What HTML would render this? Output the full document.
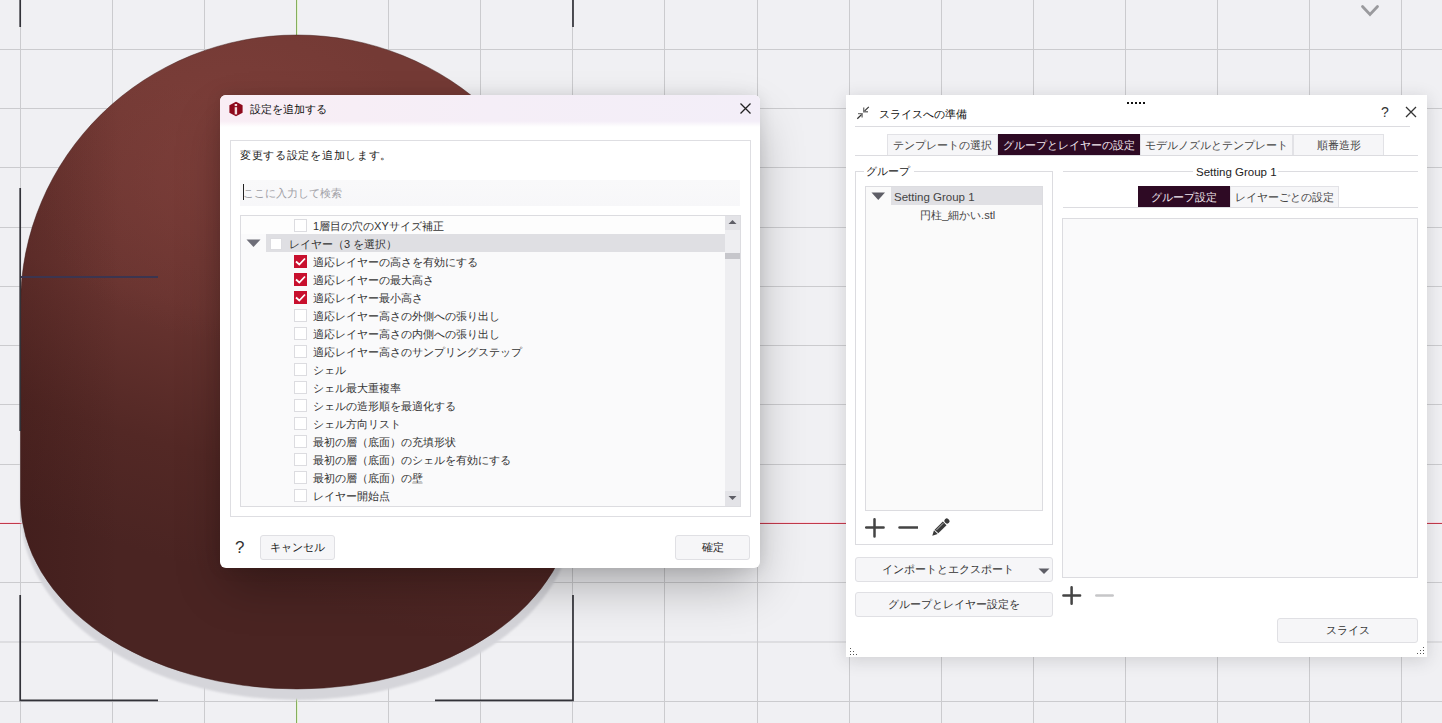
<!DOCTYPE html>
<html><head><meta charset="utf-8">
<style>
*{margin:0;padding:0;box-sizing:border-box}
html,body{width:1442px;height:723px;overflow:hidden;background:#f0f0f3;font-family:"Liberation Sans",sans-serif;color:#333}
.a{position:absolute}
.t{position:absolute;white-space:nowrap;font-size:11px;line-height:14px}
#bg{position:absolute;left:0;top:0}
#dlg{position:absolute;left:220px;top:95px;width:540px;height:473px;background:#fff;border-radius:6px;box-shadow:0 22px 46px -6px rgba(0,0,0,.30),0 0 16px rgba(0,0,0,.10);overflow:hidden}
#pnl{position:absolute;left:846px;top:95px;width:581px;height:562px;background:#fff;box-shadow:0 3px 16px rgba(40,40,50,.17)}
.btn{position:absolute;background:#f6f6f8;border:1px solid #e0e0e4;border-radius:3px;font-size:11px;line-height:22px;text-align:center;color:#222}
.cb{position:absolute;width:13px;height:13px;background:#fff;border:1px solid #dcdce0}
.cbc{position:absolute;width:13px;height:13px;background:#c8102e}
.tx{display:inline-block;white-space:nowrap}
.row{position:absolute;left:313px;font-size:11px;line-height:14px;white-space:nowrap;color:#333}
</style></head><body>
<svg id="bg" width="1442" height="723" viewBox="0 0 1442 723">
<defs>
<linearGradient id="bl" gradientUnits="userSpaceOnUse" x1="300" y1="120" x2="170" y2="560">
<stop offset="0" stop-color="#743a35"/>
<stop offset="0.45" stop-color="#693430"/>
<stop offset="0.76" stop-color="#532825"/>
<stop offset="1" stop-color="#4a2422"/>
</linearGradient>
<radialGradient id="hl" cx="0" cy="0" r="1" gradientUnits="userSpaceOnUse" gradientTransform="translate(230 170) scale(200 170)">
<stop offset="0" stop-color="#8a4540" stop-opacity="0.45"/>
<stop offset="1" stop-color="#8a4540" stop-opacity="0"/>
</radialGradient>
<linearGradient id="le" gradientUnits="userSpaceOnUse" x1="20" y1="0" x2="120" y2="0">
<stop offset="0" stop-color="#2a0c0b" stop-opacity="0.22"/>
<stop offset="1" stop-color="#2a0c0b" stop-opacity="0"/>
</linearGradient>
<filter id="sb" x="-5%" y="-5%" width="110%" height="110%"><feGaussianBlur stdDeviation="0.9"/></filter>
</defs>
<rect width="1442" height="723" fill="#f0f0f3"/>
<g stroke="#cbcbce" stroke-width="1">
<line x1="20.5" y1="0" x2="20.5" y2="723"/><line x1="112.5" y1="0" x2="112.5" y2="723"/><line x1="204.5" y1="0" x2="204.5" y2="723"/><line x1="388.5" y1="0" x2="388.5" y2="723"/><line x1="480.5" y1="0" x2="480.5" y2="723"/><line x1="572.5" y1="0" x2="572.5" y2="723"/><line x1="664.5" y1="0" x2="664.5" y2="723"/><line x1="757.5" y1="0" x2="757.5" y2="723"/><line x1="849.5" y1="0" x2="849.5" y2="723"/><line x1="941.5" y1="0" x2="941.5" y2="723"/><line x1="1033.5" y1="0" x2="1033.5" y2="723"/><line x1="1125.5" y1="0" x2="1125.5" y2="723"/><line x1="1217.5" y1="0" x2="1217.5" y2="723"/><line x1="1309.5" y1="0" x2="1309.5" y2="723"/><line x1="1401.5" y1="0" x2="1401.5" y2="723"/>
<line x1="0" y1="49.5" x2="1442" y2="49.5"/><line x1="0" y1="108.5" x2="1442" y2="108.5"/><line x1="0" y1="167.5" x2="1442" y2="167.5"/><line x1="0" y1="227.5" x2="1442" y2="227.5"/><line x1="0" y1="286.5" x2="1442" y2="286.5"/><line x1="0" y1="345.5" x2="1442" y2="345.5"/><line x1="0" y1="404.5" x2="1442" y2="404.5"/><line x1="0" y1="464.5" x2="1442" y2="464.5"/><line x1="0" y1="582.5" x2="1442" y2="582.5"/><line x1="0" y1="642" x2="1442" y2="642"/><line x1="0" y1="701.5" x2="1442" y2="701.5"/>
</g>
<line x1="0" y1="522.5" x2="1442" y2="522.5" stroke="#f9dbe6" stroke-width="1"/><line x1="0" y1="523.5" x2="1442" y2="523.5" stroke="#c23a4a" stroke-width="1"/>
<line x1="297.5" y1="0" x2="297.5" y2="723" stroke="#e4f6cf" stroke-width="1"/><line x1="296.5" y1="0" x2="296.5" y2="723" stroke="#86ad5e" stroke-width="1"/>
<!-- blob shadow -->
<path d="M20.5,317 A277 270 0 0 1 574.5,317 L574.5,511 A277 189 0 0 1 20.5,511 Z" fill="#d5d5da" filter="url(#sb)"/>
<!-- blob -->
<path d="M20.5,305 A276.5 270 0 0 1 573.5,305 L573.5,500 A276.5 189 0 0 1 20.5,500 Z" fill="url(#bl)" stroke="#3e1c1a" stroke-opacity="0.45" stroke-width="1"/>
<path d="M20.5,305 A276.5 270 0 0 1 573.5,305 L573.5,500 A276.5 189 0 0 1 20.5,500 Z" fill="url(#hl)"/>
<path d="M20.5,305 A276.5 270 0 0 1 573.5,305 L573.5,500 A276.5 189 0 0 1 20.5,500 Z" fill="url(#le)"/>
<!-- bed marks -->
<g stroke="#323238" stroke-width="1.7" fill="none">
<path d="M20.2,0 V27"/><path d="M573,0 V27"/>
<path d="M20.2,188 V431"/>
<path d="M20.2,595 V700.4 H158"/><path d="M435,700.4 H573 V595"/>
</g>
<path d="M21,277 H158" stroke="#3b3550" stroke-width="2"/>
<!-- chevron -->
<path d="M1362.5,6.5 L1370,14.5 L1377.5,6.5" stroke="#9a9a9d" stroke-width="2.8" fill="none" stroke-linecap="round" stroke-linejoin="miter"/>
</svg>

<div id="dlg">
<div class="a" style="left:0;top:0;width:540px;height:32px;background:linear-gradient(180deg,rgba(255,255,255,0) 0,rgba(255,255,255,0) 26px,#fff 32px),linear-gradient(90deg,#f9eef5,#f5eef7 50%,#f3eef8)"></div>
<svg class="a" style="left:8px;top:6px" width="16" height="16" viewBox="0 0 16 16"><path d="M8,0.7 L14.6,4.3 L14.6,11.7 L8,15.3 L1.4,11.7 L1.4,4.3 Z" fill="#8e0a1c"/><rect x="6.7" y="3" width="2.4" height="2.1" fill="#f3dede"/><rect x="6.7" y="6.2" width="2.4" height="7.2" fill="#f3dede"/></svg>
<div class="t" style="left:30px;top:7px;font-size:11px;color:#111">設定を追加する</div>
<svg class="a" style="left:519px;top:7px" width="13" height="13" viewBox="0 0 13 13"><path d="M1.5,1.5 L11.5,11.5 M11.5,1.5 L1.5,11.5" stroke="#222" stroke-width="1.3"/></svg>
<div class="a" style="left:10px;top:45px;width:521px;height:377px;border:1px solid #dedee2"></div>
<div class="t" style="left:20px;top:53px;font-size:11px;letter-spacing:0.7px;color:#222">変更する設定を追加します。</div>
<div class="a" style="left:20px;top:85px;width:500px;height:26px;background:linear-gradient(#f9f9fa,#f7f7f9)"></div>
<div class="a" style="left:23px;top:89px;width:1px;height:16px;background:#222"></div>
<div class="t" style="left:23px;top:91px;color:#a0a0a6">ここに入力して検索</div>
<div class="a" style="left:20px;top:120px;width:501px;height:292px;border:1px solid #dcdce0;background:#fafafb"></div>
<div class="a" style="left:21px;top:121px;width:484px;height:18px;background:#fdfdfd"></div>
<div class="a" style="left:46px;top:139px;width:459px;height:18px;background:#dfdfe3"></div>
<div class="a" style="left:505px;top:121px;width:15px;height:290px;background:#eeeef1"></div>
<div class="a" style="left:505px;top:121px;width:15px;height:14px;background:#e3e3e7"></div>
<div class="a" style="left:505px;top:396px;width:15px;height:15px;background:#e3e3e7"></div>
<div class="a" style="left:505px;top:158px;width:15px;height:6px;background:#c6c6cb"></div>
<svg class="a" style="left:508px;top:124px" width="9" height="6"><path d="M0.5,5 L4.5,1 L8.5,5 Z" fill="#5e5e66"/></svg>
<svg class="a" style="left:508px;top:400px" width="9" height="6"><path d="M0.5,1 L4.5,5 L8.5,1 Z" fill="#5e5e66"/></svg>
<div class="cb" style="left:74px;top:124px"></div>
<div class="row" style="left:93px;top:124px">1層目の穴のXYサイズ補正</div>
<svg class="a" style="left:26px;top:144px" width="15" height="9"><path d="M0.5,0.5 L14.5,0.5 L7.5,8 Z" fill="#6e6e78"/></svg>
<div class="cb" style="left:50px;top:143px;width:12px;height:12px"></div>
<div class="row" style="left:69px;top:142px">レイヤー（3 を選択）</div>
<svg class="a" style="left:74px;top:160px" width="13" height="13"><rect width="13" height="13" fill="#c8102e"/><path d="M2,6.5 L5.3,9.5 L11,3.5" stroke="#fff" stroke-width="1.8" fill="none"/></svg>
<div class="row" style="left:93px;top:160px">適応レイヤーの高さを有効にする</div>
<svg class="a" style="left:74px;top:178px" width="13" height="13"><rect width="13" height="13" fill="#c8102e"/><path d="M2,6.5 L5.3,9.5 L11,3.5" stroke="#fff" stroke-width="1.8" fill="none"/></svg>
<div class="row" style="left:93px;top:178px">適応レイヤーの最大高さ</div>
<svg class="a" style="left:74px;top:196px" width="13" height="13"><rect width="13" height="13" fill="#c8102e"/><path d="M2,6.5 L5.3,9.5 L11,3.5" stroke="#fff" stroke-width="1.8" fill="none"/></svg>
<div class="row" style="left:93px;top:196px">適応レイヤー最小高さ</div>
<div class="cb" style="left:74px;top:214px"></div>
<div class="row" style="left:93px;top:214px">適応レイヤー高さの外側への張り出し</div>
<div class="cb" style="left:74px;top:232px"></div>
<div class="row" style="left:93px;top:232px">適応レイヤー高さの内側への張り出し</div>
<div class="cb" style="left:74px;top:250px"></div>
<div class="row" style="left:93px;top:250px">適応レイヤー高さのサンプリングステップ</div>
<div class="cb" style="left:74px;top:268px"></div>
<div class="row" style="left:93px;top:268px">シェル</div>
<div class="cb" style="left:74px;top:286px"></div>
<div class="row" style="left:93px;top:286px">シェル最大重複率</div>
<div class="cb" style="left:74px;top:304px"></div>
<div class="row" style="left:93px;top:304px">シェルの造形順を最適化する</div>
<div class="cb" style="left:74px;top:322px"></div>
<div class="row" style="left:93px;top:322px">シェル方向リスト</div>
<div class="cb" style="left:74px;top:340px"></div>
<div class="row" style="left:93px;top:340px">最初の層（底面）の充填形状</div>
<div class="cb" style="left:74px;top:358px"></div>
<div class="row" style="left:93px;top:358px">最初の層（底面）のシェルを有効にする</div>
<div class="cb" style="left:74px;top:376px"></div>
<div class="row" style="left:93px;top:376px">最初の層（底面）の壁</div>
<div class="cb" style="left:74px;top:394px"></div>
<div class="row" style="left:93px;top:394px">レイヤー開始点</div>
<div class="t" style="left:15px;top:443px;font-size:17px;line-height:20px;color:#333">?</div>
<div class="btn" style="left:40px;top:440px;width:75px;height:25px"><span class="tx">キャンセル</span></div>
<div class="btn" style="left:455px;top:440px;width:75px;height:25px"><span class="tx">確定</span></div>
</div>
<div id="pnl">
<div class="a" style="left:281px;top:7px;width:18px;height:2px;background:repeating-linear-gradient(90deg,#111 0 2px,transparent 2px 4px)"></div>
<svg class="a" style="left:9px;top:11px" width="15" height="15" viewBox="0 0 15 15"><g stroke="#333" stroke-width="1.2" fill="none"><path d="M2.3,12.7 L6.9,8.2"/><path d="M3,7.65 H7.1 V11.6" stroke="#777" stroke-width="1.4"/><path d="M13.8,0.9 L9.2,5.4"/><path d="M8.7,1.6 V5.75 H13" stroke="#777" stroke-width="1.4"/></g></svg>
<div class="t" style="left:33px;top:12px;color:#111;font-size:11px">スライスへの準備</div>
<div class="t" style="left:535px;top:9px;font-size:14px;line-height:16px;color:#333">?</div>
<svg class="a" style="left:559px;top:11px" width="12" height="12" viewBox="0 0 12 12"><path d="M1,1 L11,11 M11,1 L1,11" stroke="#333" stroke-width="1.3"/></svg>
<div class="a" style="left:9px;top:31px;width:555px;height:1px;background:#dcdce0"></div>
<div class="a" style="left:41px;top:39px;width:111px;height:21px;background:#f6f6f8;border:1px solid #e2e2e6;border-bottom:none;color:#444;font-size:11px;line-height:21px;text-align:center;white-space:nowrap"><span class="tx">テンプレートの選択</span></div>
<div class="a" style="left:152px;top:39px;width:142px;height:21px;background:#2e0a24;color:#f3e9f1;font-size:11px;line-height:22px;text-align:center;white-space:nowrap"><span class="tx">グループとレイヤーの設定</span></div>
<div class="a" style="left:294px;top:39px;width:153px;height:21px;background:#f6f6f8;border:1px solid #e2e2e6;border-bottom:none;color:#444;font-size:11px;line-height:21px;text-align:center;white-space:nowrap"><span class="tx">モデルノズルとテンプレート</span></div>
<div class="a" style="left:447px;top:39px;width:91px;height:21px;background:#f6f6f8;border:1px solid #e2e2e6;border-bottom:none;color:#444;font-size:11px;line-height:21px;text-align:center;white-space:nowrap"><span class="tx">順番造形</span></div>
<div class="a" style="left:9px;top:60px;width:563px;height:1px;background:#dcdce0"></div>
<div class="a" style="left:9px;top:76px;width:198px;height:374px;border:1px solid #dcdce0"></div>
<div class="a" style="left:18px;top:70px;width:50px;height:12px;background:#fff"></div>
<div class="t" style="left:20px;top:69px;color:#222;font-size:11px">グループ</div>
<div class="a" style="left:19px;top:91px;width:178px;height:325px;border:1px solid #dcdce0;background:#fafafa"></div>
<div class="a" style="left:45px;top:92px;width:151px;height:18px;background:#e0e0e4"></div>
<svg class="a" style="left:25px;top:97px" width="15" height="9"><path d="M0.5,0.5 L14,0.5 L7.25,8 Z" fill="#5e5e66"/></svg>
<div class="t" style="left:48px;top:95px;color:#444;font-size:11.5px">Setting Group 1</div>
<div class="t" style="left:74px;top:113px;color:#444;font-size:11px">円柱_細かい.stl</div>
<svg class="a" style="left:19px;top:423px" width="20" height="20" viewBox="0 0 20 20"><path d="M9.5,1.3 V18.5 M1.2,9.5 H18.6" stroke="#444" stroke-width="2.5" stroke-linecap="round"/></svg>
<svg class="a" style="left:52px;top:423px" width="20" height="20" viewBox="0 0 20 20"><path d="M1.5,9.5 H19.5" stroke="#444" stroke-width="2.5" stroke-linecap="round"/></svg>
<svg class="a" style="left:79px;top:417px" width="30" height="30" viewBox="0 0 30 30"><g transform="translate(7.3 23.7) rotate(-45)" fill="#3a3a3a"><path d="M0,0 L5,-2.6 L5,2.6 Z"/><rect x="5.9" y="-2.6" width="11.6" height="5.2"/><rect x="18.4" y="-2.6" width="4.6" height="5.2" rx="2"/><path d="M7,-1.1 H16.6" stroke="#d8d8d8" stroke-width="0.8"/></g></svg>
<div class="btn" style="left:9px;top:462px;width:198px;height:25px;text-align:left;padding-left:26px;color:#333"><span class="tx">インポートとエクスポート</span></div>
<svg class="a" style="left:192px;top:473px" width="12" height="7"><path d="M0.5,0.5 L11.5,0.5 L6,6 Z" fill="#5e5e66"/></svg>
<div class="btn" style="left:9px;top:497px;width:198px;height:25px;color:#333"><span class="tx">グループとレイヤー設定を</span></div>
<div class="a" style="left:217px;top:76px;width:355px;height:1px;background:#dcdce0"></div>
<div class="a" style="left:347px;top:69px;width:85px;height:14px;background:#fff"></div>
<div class="t" style="left:350px;top:70px;color:#222;font-size:11.5px">Setting Group 1</div>
<div class="a" style="left:292px;top:91px;width:92px;height:21px;background:#2e0a24;color:#f3e9f1;font-size:11px;line-height:22px;text-align:center;white-space:nowrap"><span class="tx">グループ設定</span></div>
<div class="a" style="left:384px;top:91px;width:109px;height:21px;background:#f6f6f8;border:1px solid #e2e2e6;border-bottom:none;color:#444;font-size:11px;line-height:21px;text-align:center;white-space:nowrap"><span class="tx">レイヤーごとの設定</span></div>
<div class="a" style="left:217px;top:112px;width:355px;height:1px;background:#dcdce0"></div>
<div class="a" style="left:216px;top:123px;width:356px;height:360px;border:1px solid #dcdce0;background:#fafafb"></div>
<svg class="a" style="left:216px;top:491px" width="20" height="20" viewBox="0 0 20 20"><path d="M9.6,1.3 V17.8 M1.4,9.5 H18.1" stroke="#444" stroke-width="2.5" stroke-linecap="round"/></svg>
<svg class="a" style="left:249px;top:491px" width="20" height="20" viewBox="0 0 20 20"><path d="M1.3,9.5 H17.7" stroke="#c6c6c8" stroke-width="2.5" stroke-linecap="round"/></svg>
<div class="btn" style="left:431px;top:523px;width:141px;height:25px;color:#333"><span class="tx">スライス</span></div>
<div class="a" style="left:4px;top:553px;width:1px;height:1px;background:#555"></div>
<div class="a" style="left:4px;top:556px;width:1px;height:1px;background:#555"></div>
<div class="a" style="left:4px;top:559px;width:1px;height:1px;background:#555"></div>
<div class="a" style="left:7px;top:556px;width:1px;height:1px;background:#555"></div>
<div class="a" style="left:7px;top:559px;width:1px;height:1px;background:#555"></div>
<div class="a" style="left:10px;top:559px;width:1px;height:1px;background:#555"></div>
<div class="a" style="left:571px;top:558px;width:1px;height:1px;background:#555"></div>
<div class="a" style="left:574px;top:555px;width:1px;height:1px;background:#555"></div>
<div class="a" style="left:574px;top:558px;width:1px;height:1px;background:#555"></div>
<div class="a" style="left:577px;top:552px;width:1px;height:1px;background:#555"></div>
<div class="a" style="left:577px;top:555px;width:1px;height:1px;background:#555"></div>
<div class="a" style="left:577px;top:558px;width:1px;height:1px;background:#555"></div>
</div>
<script>
(function(){var W=[77,152.1,99,130.8,108.2,165,121,110,187,187,209,33,88,143,88,143,198,110,77,9.5,55,22,88,7.8,99,132,143,44,44,80.6,75.2,132,132,80.6,66,99,44];
function fix(){var els=document.querySelectorAll('.t,.row,.tx');
for(var i=0;i<els.length&&i<W.length;i++){var e=els[i];e.style.transform='none';var w=e.getBoundingClientRect().width;if(!w)continue;var r=W[i]/w;
if(Math.abs(r-1)>0.04){var sy=r>1.15?Math.min(r,1.25):1;e.style.transformOrigin=e.classList.contains('tx')?'50% 50%':'0 50%';e.style.transform='scale('+r.toFixed(4)+','+sy.toFixed(3)+')';}else{e.style.transform='';}}}
fix();if(document.fonts&&document.fonts.ready){document.fonts.ready.then(fix);}window.addEventListener('load',fix);})();
</script>
</body></html>
